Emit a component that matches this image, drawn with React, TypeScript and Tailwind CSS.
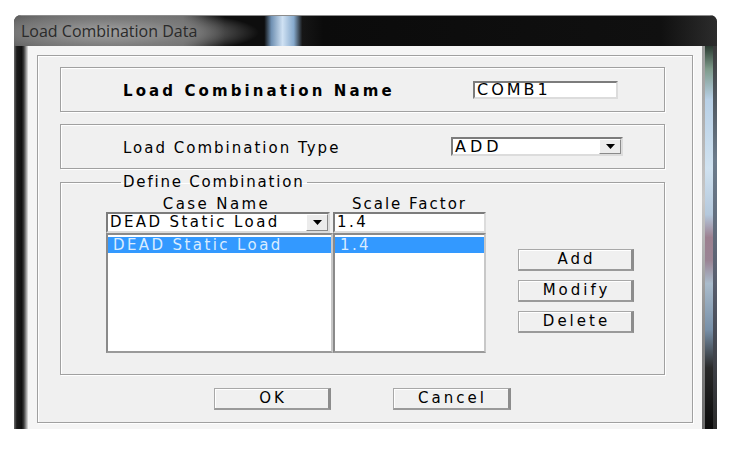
import React from 'react';

// Classic Win32 style dialog: "Load Combination Data"

const sunken =
  'bg-white border-2 border-t-[#7c7c7c] border-l-[#7c7c7c] border-r-[#dcdcdc] border-b-[#dcdcdc]';

const etched = 'border border-[#a0a0a0] shadow-[inset_1px_1px_0_#ffffff,1px_1px_0_#ffffff]';

const DownArrow = () => (
  <svg width="9" height="5" viewBox="0 0 9 5">
    <polygon points="0,0 9,0 4.5,5" fill="#000" />
  </svg>
);

const Combo = ({ value, className }: { value: string; className: string }) => (
  <div className={`flex items-stretch ${sunken} ${className}`}>
    <span className="flex-1 pl-[2px] flex items-center leading-none whitespace-nowrap">
      {value}
    </span>
    <span className="w-[22px] flex items-center justify-center bg-[#ececec] border border-t-white border-l-white border-r-[#8a8a8a] border-b-[#8a8a8a]">
      <DownArrow />
    </span>
  </div>
);

const Button = ({ label, className = '' }: { label: string; className?: string }) => (
  <button
    className={`h-[22px] flex items-center justify-center pl-[3px] text-[15px] tracking-[3px] bg-[#f0f0f0] border border-[#a8a8a8] border-r-[3px] border-r-[#8c8c8c] border-b-2 border-b-[#9a9a9a] shadow-[inset_1px_1px_0_#ffffff] ${className}`}
  >
    {label}
  </button>
);

const ListBox = ({ item, className }: { item: string; className: string }) => (
  <div
    className={`h-[120px] bg-white border-2 border-t-[#8a8a8a] border-l-[#8a8a8a] border-r-[#c8c8c8] border-b-[#9a9a9a] pt-[2px] ${className}`}
  >
    <div className="h-[16px] bg-[#3399ff] text-[#d9ecff] pl-[5px] text-[15px] leading-[16px] tracking-[2.4px] whitespace-nowrap">
      {item}
    </div>
  </div>
);

export default function App() {
  return (
    <div className="w-[731px] h-[451px] bg-white overflow-hidden font-['DejaVu_Sans',Verdana,sans-serif] text-black">
      <div className="ml-[14px] mt-[15px] w-[703px] h-[414px] flex flex-col rounded-t-[7px] overflow-hidden bg-[#151515]">
        {/* title bar */}
        <div className="h-[31px] flex items-center pl-[7px] border-t border-[#8c8c8c] bg-[radial-gradient(ellipse_150px_24px_at_95px_55%,#a2a2a2_0%,#7c7c7c_55%,transparent_100%),linear-gradient(to_right,#575757_0%,#6e6e6e_10%,#6a6a6a_24%,#2a2a2a_27.5%,#0e0e0e_30%,#0e0e0e_35.6%,#6f90b2_36.6%,#cfe1f3_38.2%,#86a9cc_39.8%,#161616_41%,#0b0b0b_44%,#101010_92%,#2c2c2c_100%)]">
          <span className="font-['Open_Sans',sans-serif] text-[16px] text-[#2a2a2a]">
            Load Combination Data
          </span>
        </div>

        <div className="flex flex-1">
          {/* left frame */}
          <div className="w-[14px] bg-[linear-gradient(to_right,#6a6a6a_0%,#1c1c1c_20%,#101010_55%,#3a3a3a_70%,#8e8e8e_85%,#e2e2e2_100%)]" />

          {/* client area */}
          <div className="flex-1 bg-[#f5f5f5] pl-[9px] pr-[9px] pt-[9px] pb-[6px]">
            <div className={`h-full bg-[#f0f0f0] pl-[22px] pt-[11px] ${etched}`}>
              {/* name */}
              <div className={`w-[605px] h-[45px] flex items-center pl-[62px] ${etched}`}>
                <span className="w-[350px] pt-[3px] text-[15px] font-bold tracking-[3.1px] whitespace-nowrap">
                  Load Combination Name
                </span>
                <div className={`w-[145px] h-[18px] flex items-center pl-[2px] ${sunken}`}>
                  <span className="text-[16px] leading-none tracking-[3px]">COMB1</span>
                </div>
              </div>

              {/* type */}
              <div className={`mt-[12px] w-[605px] h-[45px] flex items-center pl-[62px] ${etched}`}>
                <span className="w-[328px] pt-[3px] text-[15px] tracking-[2px] whitespace-nowrap">
                  Load Combination Type
                </span>
                <Combo value="ADD" className="w-[172px] h-[19px] text-[16px] tracking-[4px]" />
              </div>

              {/* define combination */}
              <fieldset className={`mt-[5px] w-[605px] pl-[45px] pb-[21px] ${etched}`}>
                <legend className="ml-[15px] px-[2px] text-[15px] leading-[17px] tracking-[1.8px]">
                  Define Combination
                </legend>
                <div className="mt-[5px] flex items-start">
                  <div className="w-[227px] flex flex-col">
                    <div className="h-[16px] leading-[16px] text-center pr-[6px] text-[15px] tracking-[2.4px]">
                      Case Name
                    </div>
                    <Combo value="DEAD Static Load" className="w-[224px] h-[21px] text-[15px] tracking-[2.4px]" />
                    <ListBox item="DEAD Static Load" className="w-[227px]" />
                  </div>
                  <div className="w-[153px] flex flex-col">
                    <div className="h-[16px] leading-[16px] text-center text-[15px] tracking-[2px]">
                      Scale Factor
                    </div>
                    <div className={`h-[21px] flex items-center pl-[2px] ${sunken}`}>
                      <span className="text-[15px] leading-none tracking-[2.5px]">1.4</span>
                    </div>
                    <ListBox item="1.4" className="w-[153px]" />
                  </div>
                  <div className="ml-[32px] pt-[53px] w-[116px] flex flex-col gap-[9px]">
                    <Button label="Add" />
                    <Button label="Modify" />
                    <Button label="Delete" />
                  </div>
                </div>
              </fieldset>

              {/* dialog buttons */}
              <div className="mt-[13px] flex gap-[62px] pl-[154px]">
                <Button label="OK" className="w-[117px]" />
                <Button label="Cancel" className="w-[118px]" />
              </div>
            </div>
          </div>

          {/* right frame */}
          <div className="w-[15px] flex">
            <div className="w-[3px] bg-[linear-gradient(to_bottom,#9a9a9a,#c8c8c8_40%,#808080_80%,#6a6a6a)]" />
            <div className="w-[8px] bg-[linear-gradient(to_bottom,#2a3a30_0%,#7e9a8a_6%,#b8d0e6_14%,#d0e2f0_32%,#b4c8dc_44%,#9c8090_50%,#9a8494_56%,#aabccc_62%,#7890a8_74%,#2a2a2a_84%,#0a0a0a_100%)]" />
            <div className="w-[4px] bg-[linear-gradient(to_bottom,#3a3a3a,#6c7c8c_30%,#5a6070_60%,#2a2a2a)]" />
          </div>
        </div>
      </div>
    </div>
  );
}
